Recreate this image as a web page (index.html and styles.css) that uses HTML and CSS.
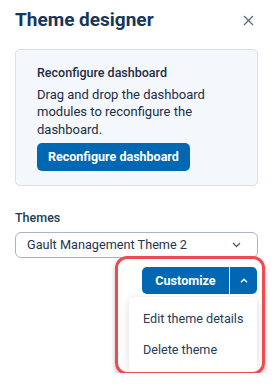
FILE: index.html
```html
<!DOCTYPE html>
<html lang="en">
<head>
  <meta charset="UTF-8" />
  <meta name="viewport" content="width=device-width, initial-scale=1.0"/>
  <title>Theme designer</title>
  <link rel="stylesheet" href="styles.css">
</head>
<body>

  <div class="panel">
    <div class="header">
      <h1>Theme designer</h1>
      <button class="close" aria-label="Close">
        <svg width="11" height="11" viewBox="0 0 11 11"><path d="M1 1L10 10M10 1L1 10" stroke="#5b6f86" stroke-width="1.4" fill="none"/></svg>
      </button>
    </div>

    <div class="card">
      <div class="card-title">Reconfigure dashboard</div>
      <p class="card-text">Drag and drop the dashboard modules to reconfigure the dashboard.</p>
      <button class="btn">Reconfigure dashboard</button>
    </div>

    <div class="field">
      <label class="label">Themes</label>
      <div class="select">
        <span>Gault Management Theme 2</span>
        <svg width="9" height="6" viewBox="0 0 9 6"><path d="M1 1L4.5 4.5L8 1" stroke="#4d5f75" stroke-width="1.3" fill="none"/></svg>
      </div>
    </div>

    <div class="actions">
      <div class="split">
        <button class="btn split-main">Customize</button>
        <button class="btn split-toggle" aria-label="More">
          <svg width="8" height="5" viewBox="0 0 8 5"><path d="M1 4.2L4 1.2L7 4.2" stroke="#fff" stroke-width="1.4" fill="none"/></svg>
        </button>
      </div>
      <ul class="menu">
        <li>Edit theme details</li>
        <li>Delete theme</li>
      </ul>
      <div class="highlight"></div>
    </div>
  </div>

</body>
</html>
```

FILE: styles.css
```css
body {
  margin: 0;
  background: #fff;
  font-family: Roboto, 'Noto Sans', sans-serif;
  color: #1d2d44;
}

.panel {
  width: 274px;
  padding: 8px 16px 0 15px;
  box-sizing: border-box;
}

.header {
  display: flex;
  justify-content: space-between;
  align-items: center;
  height: 24px;
}

.header h1 {
  margin: 0;
  font-size: 19px;
  line-height: 24px;
  font-weight: 700;
  color: #16365a;
}

.close {
  border: none;
  background: none;
  padding: 0;
  margin-right: 4px;
  display: flex;
}

.card {
  margin-top: 17px;
  background: #f4f8fd;
  border: 1px solid #d8dfe8;
  border-radius: 5px;
  padding: 14px 21px;
}

.card-title {
  font-size: 12.5px;
  font-weight: 500;
  line-height: 17.6px;
}

.card-text {
  margin: 4px 0 4.6px;
  font-size: 13px;
  line-height: 17.6px;
}

.btn {
  border: none;
  background: #0068b3;
  color: #fff;
  font-family: inherit;
  font-size: 12.5px;
  font-weight: 700;
  border-radius: 5px;
  height: 28px;
  padding: 0 11px;
  cursor: pointer;
}

.field {
  margin-top: 24px;
}

.label {
  display: block;
  font-size: 12.5px;
  font-weight: 500;
  line-height: 16px;
  color: #243b57;
  margin-bottom: 6px;
}

.select {
  display: flex;
  justify-content: space-between;
  align-items: center;
  height: 26px;
  box-sizing: border-box;
  border: 1px solid #a9b4c2;
  border-radius: 6px;
  padding: 0 16px 0 11px;
  font-size: 12.7px;
  color: #1e3550;
}

.actions {
  position: relative;
  display: flex;
  flex-direction: column;
  align-items: flex-end;
  margin-top: 9px;
  padding-right: 1px;
}

.split {
  display: flex;
  gap: 1px;
}

.split-main {
  width: 87px;
  height: 27px;
  padding: 0;
  font-size: 12.6px;
  border-radius: 5px 0 0 5px;
}

.split-toggle {
  width: 27px;
  height: 27px;
  padding: 0;
  border-radius: 0 5px 5px 0;
  display: flex;
  align-items: center;
  justify-content: center;
}

.menu {
  list-style: none;
  margin: 3px 0 0;
  padding: 6px 0 8px;
  width: 128px;
  background: #fff;
  border-radius: 5px;
  box-shadow: 0 2px 8px rgba(0, 0, 0, 0.14);
}

.menu li {
  font-size: 12.6px;
  line-height: 31px;
  padding-left: 14px;
  color: #243b57;
}

.highlight {
  position: absolute;
  left: 100px;
  top: -11px;
  right: -7px;
  height: 119px;
  box-sizing: border-box;
  border: 3.5px solid #f04a50;
  border-radius: 12px;
  box-shadow: 0 3px 5px rgba(0, 0, 0, 0.25);
  pointer-events: none;
}
```
